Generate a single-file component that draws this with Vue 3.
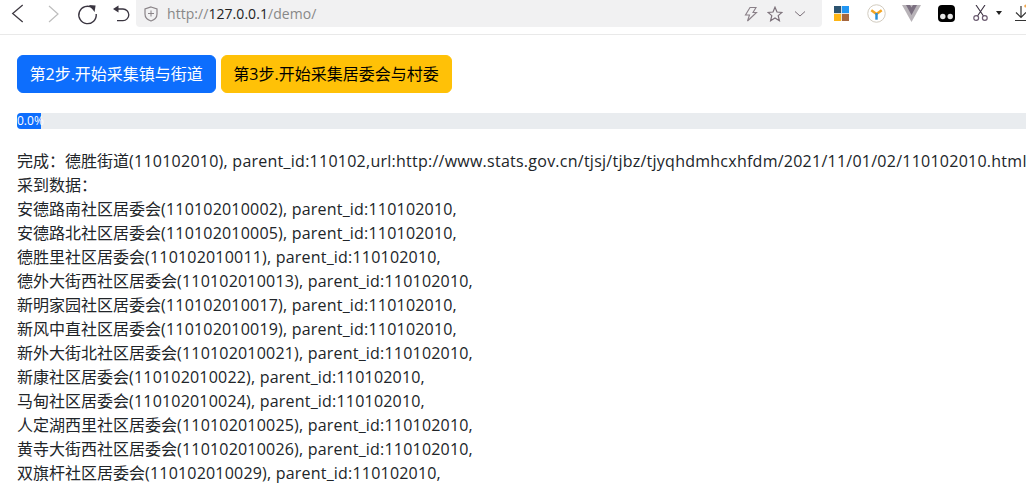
<script setup>
const rows = [
  ['安德路南社区居委会', '(110102010002), parent_id:110102010,'],
  ['安德路北社区居委会', '(110102010005), parent_id:110102010,'],
  ['德胜里社区居委会', '(110102010011), parent_id:110102010,'],
  ['德外大街西社区居委会', '(110102010013), parent_id:110102010,'],
  ['新明家园社区居委会', '(110102010017), parent_id:110102010,'],
  ['新风中直社区居委会', '(110102010019), parent_id:110102010,'],
  ['新外大街北社区居委会', '(110102010021), parent_id:110102010,'],
  ['新康社区居委会', '(110102010022), parent_id:110102010,'],
  ['马甸社区居委会', '(110102010024), parent_id:110102010,'],
  ['人定湖西里社区居委会', '(110102010025), parent_id:110102010,'],
  ['黄寺大街西社区居委会', '(110102010026), parent_id:110102010,'],
  ['双旗杆社区居委会', '(110102010029), parent_id:110102010,']
]
</script>

<template>
  <div class="page">
    <header class="chrome">
      <div class="nav">
        <svg width="22" height="22" viewBox="0 0 22 22"><path d="M14.7 2 L4.7 10.5 L14.7 19" fill="none" stroke="#3f3a42" stroke-width="1.3"/></svg>
        <svg width="22" height="22" viewBox="0 0 22 22"><path d="M7 3 L16 11 L7 19" fill="none" stroke="#bdbdbd" stroke-width="1.2"/></svg>
        <svg width="22" height="22" viewBox="0 0 22 22"><path d="M16.5 4.8 A8.7 8.7 0 1 0 20.2 11" fill="none" stroke="#3a3540" stroke-width="1.4"/><path d="M13 2 L19.6 2.6 L18.6 9 Z" fill="#3a3540"/></svg>
        <svg width="22" height="22" viewBox="0 0 22 22"><path d="M6 6 H13 A5.8 5.8 0 0 1 13 17.6 H7" fill="none" stroke="#3a3540" stroke-width="1.3"/><path d="M8.5 2.5 L3 6 L8.5 9.5 Z" fill="#3a3540"/></svg>
      </div>
      <div class="address">
        <svg class="shield" width="14" height="16" viewBox="0 0 14 16"><path d="M7 1 L13 3 V8 C13 11.5 10 14 7 15 C4 14 1 11.5 1 8 V3 Z" fill="none" stroke="#8a8488" stroke-width="1.2"/><path d="M4 7.5 H10 M7 4.5 V10.5" stroke="#8a8488" stroke-width="1"/></svg>
        <span class="url"><span class="dim">http://</span>127.0.0.1<span class="dim">/demo/</span></span>
        <span class="addr-actions">
          <svg width="14" height="16" viewBox="0 0 14 16"><path d="M6 1.5 H12 L9 6.5 H12.5 L3.5 15 L5.5 9 H1.5 Z" fill="none" stroke="#8a8088" stroke-width="1.1"/></svg>
          <svg width="16" height="16" viewBox="0 0 16 16"><path d="M8 1.2 L10 6 L15 6.4 L11.2 9.6 L12.4 14.7 L8 12 L3.6 14.7 L4.8 9.6 L1 6.4 L6 6 Z" fill="none" stroke="#7a6f78" stroke-width="1.2"/></svg>
          <svg width="12" height="8" viewBox="0 0 12 8"><path d="M1 1.5 L6 6 L11 1.5" fill="none" stroke="#7a6f78" stroke-width="1"/></svg>
        </span>
      </div>
      <div class="exts">
        <svg class="e-grid" width="15" height="15" viewBox="0 0 16 16"><rect width="7.6" height="7.6" fill="#2d5470"/><rect x="8.4" width="7.6" height="7.6" fill="#2196f3"/><rect y="8.4" width="7.6" height="7.6" fill="#fdb515"/><rect x="8.4" y="8.4" width="7.6" height="7.6" fill="#a5673f"/></svg>
        <svg class="e-y" width="19" height="19" viewBox="0 0 20 20"><circle cx="10" cy="10" r="9.2" fill="#fff" stroke="#cfc8bc" stroke-width="1"/><path d="M10 10.5 L4.5 6.5 M10 10.5 L15.5 6.5" stroke="#f4a522" stroke-width="2.6"/><path d="M10 9.5 V16.5" stroke="#2b8fd8" stroke-width="2.6"/></svg>
        <svg class="e-v" width="19" height="17" viewBox="0 0 19 17"><path d="M0 0 H19 L9.5 17 Z" fill="#b8b3b8"/><path d="M4 0 H8 L9.5 2.5 L11 0 H15 L9.5 10 Z" fill="#7b6f80"/></svg>
        <svg class="e-t" width="17" height="17" viewBox="0 0 17 17"><rect width="17" height="17" rx="4" fill="#000"/><circle cx="4.8" cy="11.5" r="2.7" fill="#e6e6e6"/><circle cx="12.2" cy="11.5" r="2.7" fill="#e6e6e6"/></svg>
        <svg class="e-s" width="15" height="16" viewBox="0 0 15 16"><path d="M3 0 L10.5 11 M12 0 L4.5 11" stroke="#3a3040" stroke-width="1.1"/><circle cx="3.2" cy="13" r="2.4" fill="none" stroke="#6a5a70" stroke-width="1.2"/><circle cx="11.8" cy="13" r="2.4" fill="none" stroke="#6a5a70" stroke-width="1.2"/></svg>
        <i class="caret"></i>
        <svg class="e-d" width="12" height="18" viewBox="0 0 12 18"><path d="M6 2 V13 M1 8.5 L6 13.5 L11 8.5 M0 16.5 H12" fill="none" stroke="#333" stroke-width="1.2"/><circle cx="10.8" cy="2" r="1.6" fill="#f2a64a"/></svg>
      </div>
    </header>

    <main class="content">
      <div class="buttons">
        <button class="btn blue">第2步.开始采集镇与街道</button>
        <button class="btn yellow">第3步.开始采集居委会与村委</button>
      </div>
      <div class="progress"><div class="bar">0.0%</div></div>
      <div class="log">
        <div>完成：德胜街道<span class="wide">(110102010), parent_id:110102,url:http://www.stats.gov.cn/tjsj/tjbz/tjyqhdmhcxhfdm/2021/11/01/02/110102010.html</span></div>
        <div>采到数据：</div>
        <div v-for="r in rows" :key="r[1]">{{ r[0] }}<span class="latin">{{ r[1] }}</span></div>
      </div>
    </main>
  </div>
</template>

<style>
html, body { margin: 0; overflow: hidden; background: #fff; }
</style>

<style scoped>
.page {
  width: 1026px;
  height: 484px;
  overflow: hidden;
  font-family: "Open Sans", "Noto Sans CJK SC", sans-serif;
  color: #212529;
}
.chrome {
  height: 34px;
  display: flex;
  align-items: flex-start;
  border-bottom: 1px solid #e9e9e9;
}
.nav {
  width: 136px;
  height: 28px;
  display: flex;
  align-items: center;
  gap: 12px;
  padding-left: 8px;
  box-sizing: border-box;
}
.nav svg { flex: none; }
.address {
  width: 686px;
  height: 27px;
  background: #f1f1f2;
  border-radius: 0 0 4px 4px;
  display: flex;
  align-items: center;
  padding: 0 16px 0 8px;
  box-sizing: border-box;
}
.shield { flex: none; }
.url { margin-left: 9px; font-size: 14px; letter-spacing: 0.05px; color: #222; }
.dim { color: #888; }
.addr-actions { margin-left: auto; display: flex; align-items: center; }
.addr-actions svg + svg { margin-left: 9px; }
.addr-actions svg:last-child { margin-left: 11px; }
.exts {
  flex: 1;
  height: 26px;
  display: flex;
  align-items: center;
  padding-left: 12px;
  overflow: hidden;
}
.exts svg { flex: none; }
.e-y { margin-left: 18px; }
.e-v { margin-left: 16px; }
.e-t { margin-left: 17px; }
.e-s { margin-left: 18px; }
.e-d { margin-left: 13px; }
.caret {
  flex: none;
  margin-left: 8px;
  width: 0;
  height: 0;
  border: 3px solid transparent;
  border-top: 4px solid #222;
  border-bottom: 0;
}
.content { padding: 20px 0 0 17px; }
.buttons { display: flex; gap: 5px; }
.btn {
  height: 38px;
  padding: 0 12px 0 11.5px;
  font: inherit;
  font-size: 16px;
  line-height: 24px;
  border: 1px solid;
  border-radius: 6px;
}
.blue { background: #0d6efd; border-color: #0d6efd; color: #fff; }
.yellow { background: #ffc107; border-color: #ffc107; color: #000; }
.progress {
  margin-top: 20px;
  height: 16px;
  background: #e9ecef;
  border-radius: 4px 0 0 4px;
  font-size: 12px;
  line-height: 16px;
  overflow: hidden;
}
.bar {
  width: 24px;
  height: 16px;
  background: #0d6efd;
  color: #fff;
  white-space: nowrap;
}
.log { margin-top: 20px; font-size: 16px; line-height: 24px; white-space: nowrap; }
.latin { letter-spacing: 0.2px; }
.wide { letter-spacing: 0.25px; }
</style>
